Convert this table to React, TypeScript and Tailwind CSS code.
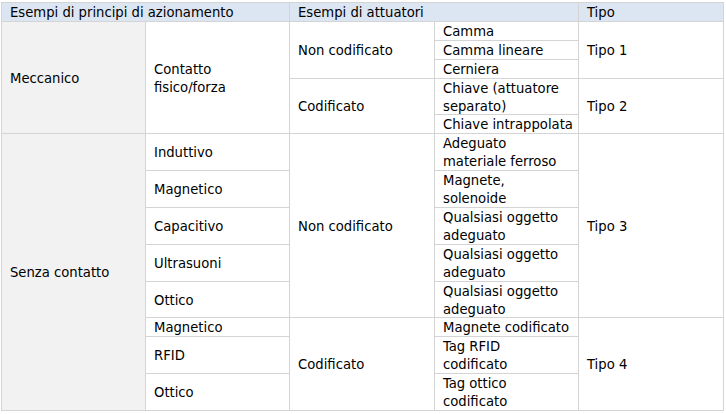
import React from "react";

const td =
  "border border-[#d4d4d4] pl-[8px] pr-[2px] py-0 align-middle text-left font-normal whitespace-nowrap";

export default function App() {
  return (
    <div className="w-[726px] h-[414px] bg-white pt-[2px] pl-[1px]">
      <table
        className="table-fixed border-collapse w-[722px] text-[14.67px] leading-[17.9px] text-[#000]"
        style={{ fontFamily: '"DejaVu Sans Condensed", "Liberation Sans", sans-serif' }}
      >
        <colgroup>
          <col className="w-[144px]" />
          <col className="w-[144px]" />
          <col className="w-[145px]" />
          <col className="w-[144px]" />
          <col className="w-[145px]" />
        </colgroup>
        <thead>
          <tr className="bg-[#dce6f2]">
            <th colSpan={2} className={td}>Esempi di principi di azionamento</th>
            <th colSpan={2} className={td}>Esempi di attuatori</th>
            <th className={td}>Tipo</th>
          </tr>
        </thead>
        <tbody>
          <tr>
            <td rowSpan={5} className={`${td} bg-[#f2f2f2]`}>Meccanico</td>
            <td rowSpan={5} className={td}>Contatto<br />fisico/forza</td>
            <td rowSpan={3} className={td}>Non codificato</td>
            <td className={td}>Camma</td>
            <td rowSpan={3} className={td}>Tipo 1</td>
          </tr>
          <tr><td className={td}>Camma lineare</td></tr>
          <tr><td className={td}>Cerniera</td></tr>
          <tr>
            <td rowSpan={2} className={td}>Codificato</td>
            <td className={td}>Chiave (attuatore<br />separato)</td>
            <td rowSpan={2} className={td}>Tipo 2</td>
          </tr>
          <tr><td className={td}>Chiave intrappolata</td></tr>
          <tr>
            <td rowSpan={8} className={`${td} bg-[#f2f2f2]`}>Senza contatto</td>
            <td className={td}>Induttivo</td>
            <td rowSpan={5} className={td}>Non codificato</td>
            <td className={td}>Adeguato<br />materiale ferroso</td>
            <td rowSpan={5} className={td}>Tipo 3</td>
          </tr>
          <tr>
            <td className={td}>Magnetico</td>
            <td className={td}>Magnete,<br />solenoide</td>
          </tr>
          <tr>
            <td className={td}>Capacitivo</td>
            <td className={td}>Qualsiasi oggetto<br />adeguato</td>
          </tr>
          <tr>
            <td className={td}>Ultrasuoni</td>
            <td className={td}>Qualsiasi oggetto<br />adeguato</td>
          </tr>
          <tr>
            <td className={td}>Ottico</td>
            <td className={td}>Qualsiasi oggetto<br />adeguato</td>
          </tr>
          <tr>
            <td className={td}>Magnetico</td>
            <td rowSpan={3} className={td}>Codificato</td>
            <td className={td}>Magnete codificato</td>
            <td rowSpan={3} className={td}>Tipo 4</td>
          </tr>
          <tr>
            <td className={td}>RFID</td>
            <td className={td}>Tag RFID<br />codificato</td>
          </tr>
          <tr>
            <td className={td}>Ottico</td>
            <td className={td}>Tag ottico<br />codificato</td>
          </tr>
        </tbody>
      </table>
    </div>
  );
}
